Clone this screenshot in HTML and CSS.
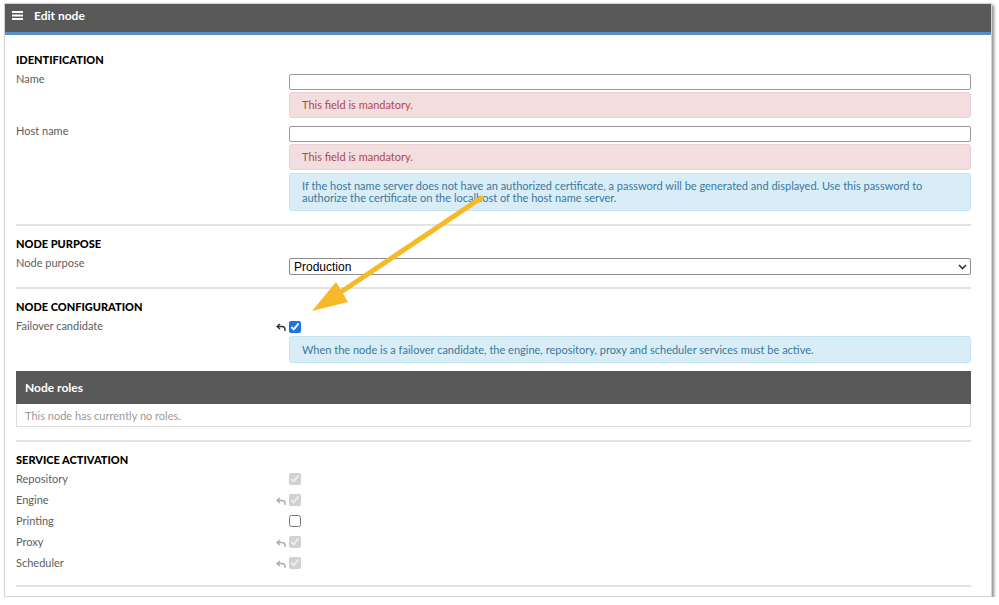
FILE: index.html
```html
<!DOCTYPE html>
<html lang="en">
<head>
<meta charset="UTF-8">
<meta name="viewport" content="width=device-width, initial-scale=1.0">
<link rel="stylesheet" href="styles.css">
</head>
<body>

<div class="window">
    <div class="titlebar">
        <svg class="menu-icon" width="11" height="9" viewBox="0 0 11 9">
            <rect x="0" y="0" width="11" height="2" fill="#fff"/>
            <rect x="0" y="3.5" width="11" height="2" fill="#fff"/>
            <rect x="0" y="7" width="11" height="2" fill="#fff"/>
        </svg>
        <span>Edit node</span>
    </div>

    <div class="content">
        <div class="section">
            <h2>Identification</h2>
            <div class="row">
                <label for="name">Name</label>
                <div class="undo"></div>
                <div class="field">
                    <input type="text" id="name">
                    <div class="alert error">This field is mandatory.</div>
                </div>
            </div>
            <div class="row">
                <label for="hostname">Host name</label>
                <div class="undo"></div>
                <div class="field">
                    <input type="text" id="hostname">
                    <div class="alert error">This field is mandatory.</div>
                    <div class="alert info">If the host name server does not have an authorized certificate, a password will be generated and displayed. Use this password to authorize the certificate on the localhost of the host name server.</div>
                </div>
            </div>
        </div>

        <div class="section purpose">
            <h2>Node purpose</h2>
            <div class="row">
                <label for="purpose">Node purpose</label>
                <div class="undo"></div>
                <div class="field">
                    <div class="select-wrap">
                        <select id="purpose">
                            <option>Production</option>
                            <option>Development</option>
                            <option>Both</option>
                        </select>
                        <svg class="chevron" width="9" height="6" viewBox="0 0 9 6">
                            <path d="M1 1 L4.5 4.5 L8 1" fill="none" stroke="#333" stroke-width="1.6"/>
                        </svg>
                    </div>
                </div>
            </div>
        </div>

        <div class="section config">
            <h2>Node configuration</h2>
            <div class="row">
                <label for="failover">Failover candidate</label>
                <div class="undo">
                    <svg width="10" height="8" viewBox="0 0 10 8"><path d="M4 1 L1 3.5 L4 6 M1 3.5 H6 Q9 3.5 9 6.5 V8" fill="none" stroke="#333" stroke-width="1.4"/></svg>
                </div>
                <div class="field">
                    <div class="check"><input type="checkbox" id="failover" checked></div>
                    <div class="alert info">When the node is a failover candidate, the engine, repository, proxy and scheduler services must be active.</div>
                </div>
            </div>
            <div class="roles">
                <div class="roles-head">Node roles</div>
                <div class="roles-body">This node has currently no roles.</div>
            </div>
        </div>

        <div class="section services">
            <h2>Service activation</h2>
            <div class="row service">
                <label>Repository</label>
                <div class="undo"></div>
                <div class="field"><input type="checkbox" checked disabled></div>
            </div>
            <div class="row service">
                <label>Engine</label>
                <div class="undo">
                    <svg width="10" height="8" viewBox="0 0 10 8"><path d="M4 1 L1 3.5 L4 6 M1 3.5 H6 Q9 3.5 9 6.5 V8" fill="none" stroke="#aaa" stroke-width="1.4"/></svg>
                </div>
                <div class="field"><input type="checkbox" checked disabled></div>
            </div>
            <div class="row service">
                <label>Printing</label>
                <div class="undo"></div>
                <div class="field"><input type="checkbox"></div>
            </div>
            <div class="row service">
                <label>Proxy</label>
                <div class="undo">
                    <svg width="10" height="8" viewBox="0 0 10 8"><path d="M4 1 L1 3.5 L4 6 M1 3.5 H6 Q9 3.5 9 6.5 V8" fill="none" stroke="#aaa" stroke-width="1.4"/></svg>
                </div>
                <div class="field"><input type="checkbox" checked disabled></div>
            </div>
            <div class="row service">
                <label>Scheduler</label>
                <div class="undo">
                    <svg width="10" height="8" viewBox="0 0 10 8"><path d="M4 1 L1 3.5 L4 6 M1 3.5 H6 Q9 3.5 9 6.5 V8" fill="none" stroke="#aaa" stroke-width="1.4"/></svg>
                </div>
                <div class="field"><input type="checkbox" checked disabled></div>
            </div>
        </div>
    </div>
</div>

<!-- annotation arrow drawn over the screenshot -->
<svg class="annotation" width="999" height="605" viewBox="0 0 999 605">
    <line x1="481" y1="198" x2="338" y2="294" stroke="#f7b928" stroke-width="5" stroke-linecap="round"/>
    <polygon points="312,311 336,282 348,302" fill="#f7b928"/>
</svg>

</body>
</html>
```

FILE: styles.css
```css
body {
    margin: 0;
    background-color: #fff;
    font-family: Lato, "Liberation Sans", sans-serif;
    font-size: 11px;
    color: #5e5e5e;
}
.window {
    margin: 3px 0 0 4px;
    width: 988px;
    height: 594px;
    box-sizing: border-box;
    border: 1px solid #d4d4d4;
    background-color: #fff;
    box-shadow: 2px 2px 3px rgba(0, 0, 0, 0.45);
}
.titlebar {
    height: 31px;
    box-sizing: border-box;
    background-color: #595959;
    border-bottom: 3px solid #5b8ec8;
    display: flex;
    align-items: flex-start;
    gap: 11px;
    padding: 4px 0 0 7px;
    line-height: 16px;
    color: #fff;
    font-weight: bold;
    font-size: 12px;
}
.menu-icon {
    margin-top: 3px;
}
.content {
    padding: 6px 20px 0 11px;
}
.section {
    padding: 11px 0 14px;
    border-bottom: 2px solid #e2e2e2;
}
.section:first-child {
    padding-top: 12px;
    padding-bottom: 13px;
}
.section h2 {
    margin: 0 0 4px;
    font-size: 11px;
    line-height: 14px;
    font-weight: 900;
    text-transform: uppercase;
    color: #000;
}
.purpose {
    padding-bottom: 12px;
}
.config {
    padding-bottom: 14px;
}
.services {
    padding-top: 11px;
    padding-bottom: 12px;
}
.row {
    display: grid;
    grid-template-columns: 260px 13px 1fr;
}
.row + .row {
    margin-top: 5px;
}
.row label {
    line-height: 16px;
}
.undo {
    padding-top: 2px;
}
.field {
    padding-top: 3px;
    display: flex;
    flex-direction: column;
    gap: 2px;
}
.field input[type="text"] {
    height: 16px;
    width: 100%;
    margin: 0;
    box-sizing: border-box;
    border: 1px solid #9a9a9a;
    border-radius: 2px;
}
.field input[type="checkbox"] {
    margin: 0;
    width: 12px;
    height: 12px;
    accent-color: #1a73e8;
}
.check {
    height: 12px;
}
.alert {
    border-radius: 3px;
    padding: 6px 12px;
    line-height: 14px;
}
.error {
    background-color: #f2dede;
    border: 1px solid #ebd0d3;
    color: #b0474f;
    padding: 5px 12px;
}
.info {
    background-color: #d9edf7;
    border: 1px solid #c4e3f0;
    color: #3a78a0;
    line-height: 12px;
    margin-top: 1px;
}
.check + .info {
    margin-top: 1px;
    padding: 6px 12px;
    line-height: 13px;
}
.select-wrap {
    position: relative;
}
.select-wrap select {
    appearance: none;
    width: 100%;
    height: 17px;
    margin: 0;
    padding: 0 4px;
    border: 1px solid #8e8e8e;
    border-radius: 2px;
    background-color: #fff;
    font-family: "Liberation Sans", Arial, sans-serif;
    font-size: 12px;
    color: #000;
}
.chevron {
    position: absolute;
    right: 4px;
    top: 6px;
}
.roles {
    margin-top: 8px;
}
.roles-head {
    height: 33px;
    line-height: 33px;
    background-color: #595959;
    color: #fff;
    font-weight: bold;
    font-size: 12px;
    padding-left: 9px;
}
.roles-body {
    height: 23px;
    line-height: 23px;
    border: 1px solid #dcdcdc;
    border-top: none;
    box-sizing: border-box;
    padding-left: 8px;
    color: #9a9a9a;
}
.config {
    padding-bottom: 13px;
}
.section h2 + .service {
    margin-top: -3px;
}
.row.service + .row.service {
    margin-top: 0;
}
.service label {
    line-height: 21px;
}
.service .undo {
    padding-top: 5px;
}
.service .field {
    padding-top: 5px;
}
.annotation {
    position: absolute;
    top: 0;
    left: 0;
    pointer-events: none;
}
```
